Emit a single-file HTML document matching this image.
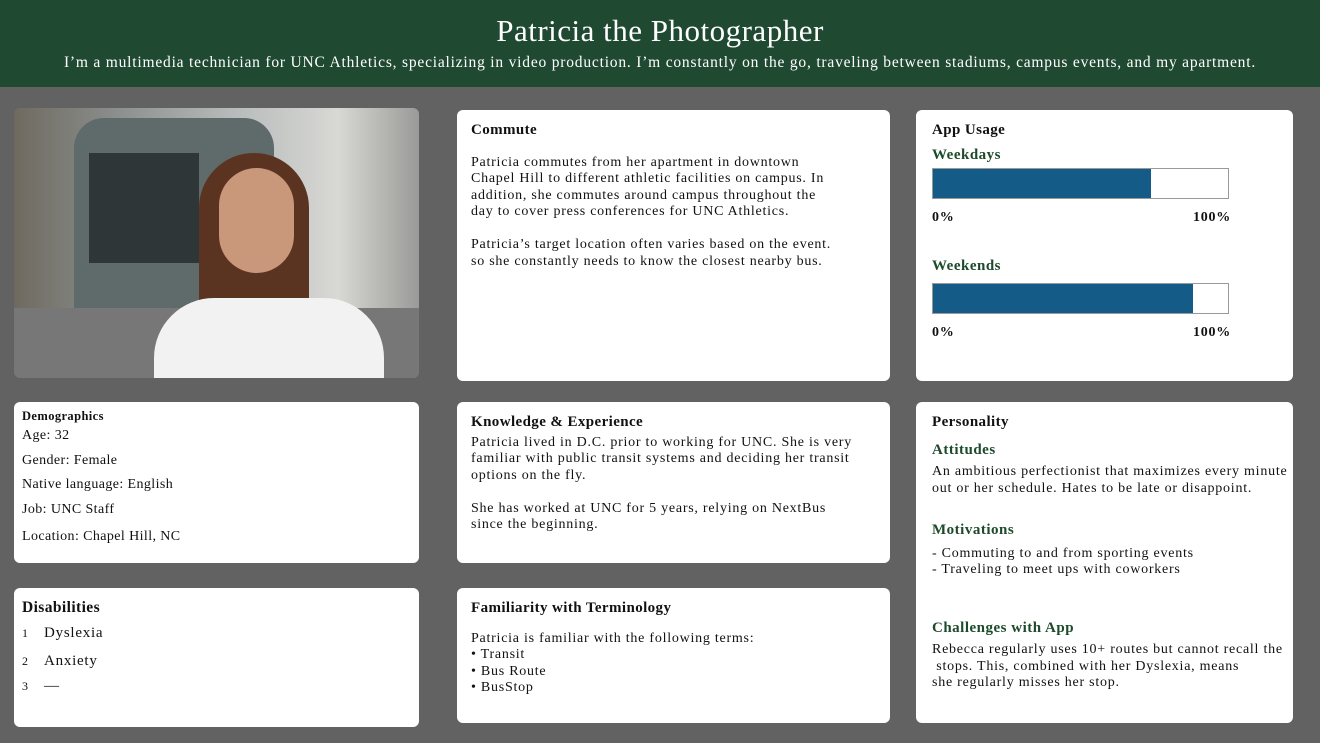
<!DOCTYPE html>
<html><head><meta charset="utf-8"><style>
body{margin:0;width:1320px;height:743px;background:#626262;font-family:"Liberation Serif",serif;color:#111;position:relative;overflow:hidden}
.hdr{position:absolute;left:0;top:0;width:1320px;height:87px;background:#1f4930;color:#fff;text-align:center}
.hdr h1{margin:0;position:absolute;top:13px;width:100%;font-weight:normal;font-size:31px;letter-spacing:0.5px}
.hdr p{margin:0;position:absolute;top:54px;width:100%;font-size:15.5px;letter-spacing:0.8px}
.c{position:absolute;background:#fff;border-radius:6px;box-sizing:border-box;padding:12px 14px;font-size:14px;line-height:16.5px;letter-spacing:0.75px}
.t{font-weight:bold;font-size:15px;margin-bottom:0;letter-spacing:0.4px}
.g{color:#1c4a2a;font-weight:bold;font-size:15px;letter-spacing:0.5px}
.p{position:absolute}
.bar{position:absolute;left:16px;width:297px;height:31px;border:1px solid #999;background:#fff;box-sizing:border-box}
.bar div{height:100%;background:#155b88}
</style></head><body>
<div class="hdr"><h1>Patricia the Photographer</h1><p>I’m a multimedia technician for UNC Athletics, specializing in video production. I’m constantly on the go, traveling between stadiums, campus events, and my apartment.</p></div>

<div style="position:absolute;left:14px;top:108px;width:405px;height:270px;border-radius:6px;overflow:hidden;background:linear-gradient(90deg,#6f6a60 0%,#8a8e8c 25%,#b8bcbc 55%,#d8d8d4 80%,#9a9a98 100%)">
 <div style="position:absolute;left:60px;top:10px;width:200px;height:220px;background:#5f6a6a;border-radius:30px 30px 4px 4px"></div>
 <div style="position:absolute;left:75px;top:45px;width:110px;height:110px;background:#2e3638"></div>
 <div style="position:absolute;left:0;top:200px;width:405px;height:70px;background:#777"></div>
 <div style="position:absolute;left:185px;top:45px;width:110px;height:190px;background:#5a3420;border-radius:55px 55px 20px 20px"></div>
 <div style="position:absolute;left:205px;top:60px;width:75px;height:105px;background:#c9977a;border-radius:40px"></div>
 <div style="position:absolute;left:140px;top:190px;width:230px;height:90px;background:#f2f2f2;border-radius:60px 60px 0 0"></div>
</div>

<div class="c" style="left:457px;top:110px;width:433px;height:271px">
<div class="t">Commute</div><div style="height:16px"></div>
Patricia commutes from her apartment in downtown<br>Chapel Hill to different athletic facilities on campus. In<br>addition, she commutes around campus throughout the<br>day to cover press conferences for UNC Athletics.<br><br>Patricia’s target location often varies based on the event.<br>so she constantly needs to know the closest nearby bus.
</div>

<div class="c" style="left:916px;top:110px;width:377px;height:271px;padding-left:16px">
<div class="t">App Usage</div>
<div class="g" style="margin-top:8px">Weekdays</div>
<div class="bar" style="top:58px"><div style="width:74%"></div></div>
<div class="p" style="top:100px;left:16px;font-weight:bold">0%</div><div class="p" style="top:100px;left:277px;font-weight:bold">100%</div>
<div class="g p" style="top:148px;left:16px">Weekends</div>
<div class="bar" style="top:173px"><div style="width:88%"></div></div>
<div class="p" style="top:215px;left:16px;font-weight:bold">0%</div><div class="p" style="top:215px;left:277px;font-weight:bold">100%</div>
</div>

<div class="c" style="left:14px;top:402px;width:405px;height:161px;padding:6px 8px;line-height:24.5px;letter-spacing:0.4px">
<div style="font-weight:bold;font-size:12.5px;line-height:16px">Demographics</div>
Age: 32<br>Gender: Female<br>Native language: English<br>Job: UNC Staff<br><span style="display:block;margin-top:3px">Location: Chapel Hill, NC</span>
</div>

<div class="c" style="left:457px;top:402px;width:433px;height:161px">
<div class="t">Knowledge &amp; Experience</div>
<div style="margin-top:4px">Patricia lived in D.C. prior to working for UNC. She is very<br>familiar with public transit systems and deciding her transit<br>options on the fly.<br><br>She has worked at UNC for 5 years, relying on NextBus<br>since the beginning.</div>
</div>

<div class="c" style="left:916px;top:402px;width:377px;height:321px;padding-right:0;padding-left:16px">
<div class="t">Personality</div>
<div class="g" style="margin-top:11px">Attitudes</div>
<div style="margin-top:6px;white-space:nowrap">An ambitious perfectionist that maximizes every minute<br>out or her schedule. Hates to be late or disappoint.</div>
<div class="g" style="margin-top:25px">Motivations</div>
<div style="margin-top:7px">- Commuting to and from sporting events<br>- Traveling to meet ups with coworkers</div>
<div class="g" style="margin-top:41px">Challenges with App</div>
<div style="margin-top:6px">Rebecca regularly uses 10+ routes but cannot recall the<br>&nbsp;stops. This, combined with her Dyslexia, means<br>she regularly misses her stop.</div>
</div>

<div class="c" style="left:14px;top:588px;width:405px;height:139px;padding:12px 8px">
<div class="t" style="font-size:15.5px">Disabilities</div>
<div style="font-size:15px;line-height:28px;margin-top:2px">
<div><span style="display:inline-block;width:22px;font-size:12px">1</span>Dyslexia</div>
<div><span style="display:inline-block;width:22px;font-size:12px">2</span>Anxiety</div>
<div style="line-height:22px"><span style="display:inline-block;width:22px;font-size:12px">3</span>—</div>
</div></div>

<div class="c" style="left:457px;top:588px;width:433px;height:135px">
<div class="t">Familiarity with Terminology</div><div style="height:14px"></div>
Patricia is familiar with the following terms:<br>• Transit<br>• Bus Route<br>• BusStop
</div>
</body></html>
